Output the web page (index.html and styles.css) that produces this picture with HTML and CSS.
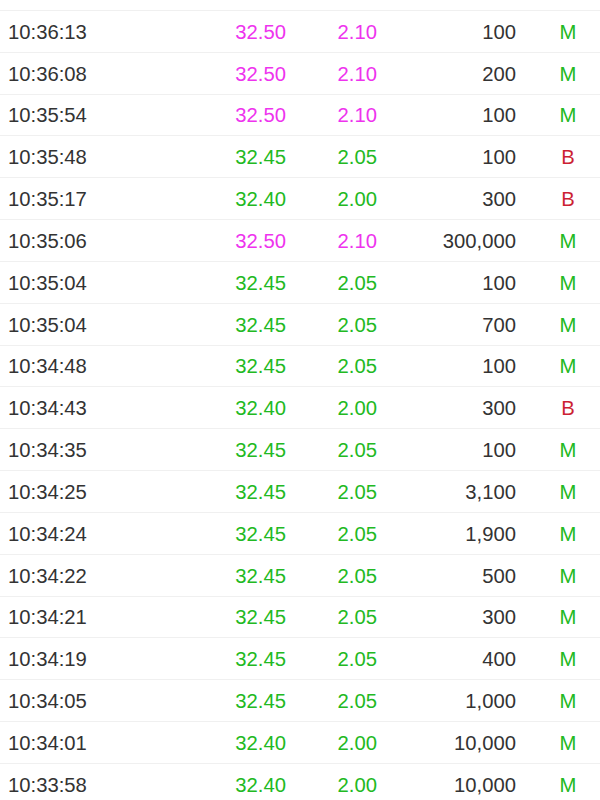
FILE: index.html
```html
<!DOCTYPE html>
<html>
<head>
<meta charset="utf-8">
<link rel="stylesheet" href="styles.css">
</head>
<body>
<div class="list">
  <div class="row"><span class="time">10:36:13</span><span class="num up">32.50</span><span class="num up">2.10</span><span class="num vol">100</span><span class="flag m">M</span></div>
  <div class="row"><span class="time">10:36:08</span><span class="num up">32.50</span><span class="num up">2.10</span><span class="num vol">200</span><span class="flag m">M</span></div>
  <div class="row"><span class="time">10:35:54</span><span class="num up">32.50</span><span class="num up">2.10</span><span class="num vol">100</span><span class="flag m">M</span></div>
  <div class="row"><span class="time">10:35:48</span><span class="num gr">32.45</span><span class="num gr">2.05</span><span class="num vol">100</span><span class="flag b">B</span></div>
  <div class="row"><span class="time">10:35:17</span><span class="num gr">32.40</span><span class="num gr">2.00</span><span class="num vol">300</span><span class="flag b">B</span></div>
  <div class="row"><span class="time">10:35:06</span><span class="num up">32.50</span><span class="num up">2.10</span><span class="num vol">300,000</span><span class="flag m">M</span></div>
  <div class="row"><span class="time">10:35:04</span><span class="num gr">32.45</span><span class="num gr">2.05</span><span class="num vol">100</span><span class="flag m">M</span></div>
  <div class="row"><span class="time">10:35:04</span><span class="num gr">32.45</span><span class="num gr">2.05</span><span class="num vol">700</span><span class="flag m">M</span></div>
  <div class="row"><span class="time">10:34:48</span><span class="num gr">32.45</span><span class="num gr">2.05</span><span class="num vol">100</span><span class="flag m">M</span></div>
  <div class="row"><span class="time">10:34:43</span><span class="num gr">32.40</span><span class="num gr">2.00</span><span class="num vol">300</span><span class="flag b">B</span></div>
  <div class="row"><span class="time">10:34:35</span><span class="num gr">32.45</span><span class="num gr">2.05</span><span class="num vol">100</span><span class="flag m">M</span></div>
  <div class="row"><span class="time">10:34:25</span><span class="num gr">32.45</span><span class="num gr">2.05</span><span class="num vol">3,100</span><span class="flag m">M</span></div>
  <div class="row"><span class="time">10:34:24</span><span class="num gr">32.45</span><span class="num gr">2.05</span><span class="num vol">1,900</span><span class="flag m">M</span></div>
  <div class="row"><span class="time">10:34:22</span><span class="num gr">32.45</span><span class="num gr">2.05</span><span class="num vol">500</span><span class="flag m">M</span></div>
  <div class="row"><span class="time">10:34:21</span><span class="num gr">32.45</span><span class="num gr">2.05</span><span class="num vol">300</span><span class="flag m">M</span></div>
  <div class="row"><span class="time">10:34:19</span><span class="num gr">32.45</span><span class="num gr">2.05</span><span class="num vol">400</span><span class="flag m">M</span></div>
  <div class="row"><span class="time">10:34:05</span><span class="num gr">32.45</span><span class="num gr">2.05</span><span class="num vol">1,000</span><span class="flag m">M</span></div>
  <div class="row"><span class="time">10:34:01</span><span class="num gr">32.40</span><span class="num gr">2.00</span><span class="num vol">10,000</span><span class="flag m">M</span></div>
  <div class="row"><span class="time">10:33:58</span><span class="num gr">32.40</span><span class="num gr">2.00</span><span class="num vol">10,000</span><span class="flag m">M</span></div>
</div>
</body>
</html>
```

FILE: styles.css
```css
html, body {
  margin: 0;
  padding: 0;
  background: #ffffff;
}
body {
  width: 600px;
  height: 800px;
  overflow: hidden;
  font-family: "Liberation Sans", Arial, sans-serif;
  font-size: 20.25px;
  color: #333333;
}
.list {
  padding-top: 10px;
}
.row {
  display: grid;
  grid-template-columns: 200px 86px 91px 139px 84px;
  align-items: center;
  box-sizing: border-box;
  height: 41.83px;
  border-top: 1px solid #f0f0f0;
  line-height: 1;
  padding-top: 1px;
}
.time {
  padding-left: 8px;
}
.num {
  text-align: right;
}
.vol {
  color: #333333;
}
.up {
  color: #ee33ee;
}
.gr {
  color: #22b922;
}
.flag {
  padding-left: 20px;
  text-align: center;
}
.flag.m {
  color: #22b922;
}
.flag.b {
  color: #cc1f33;
}
```
